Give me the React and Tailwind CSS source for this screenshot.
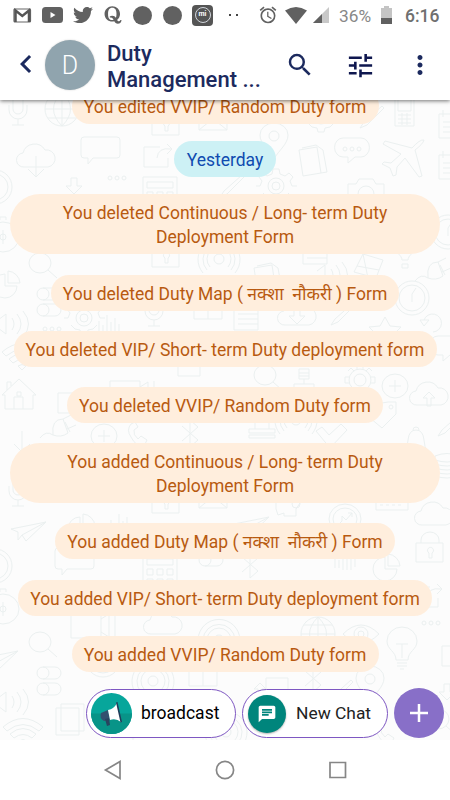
import React from "react";
import { FaTwitter, FaQuora } from "react-icons/fa";
import { MdAlarm, MdChat, MdChevronLeft, MdMoreVert, MdSearch, MdTune } from "react-icons/md";

const messages = [
  { text: "You edited VVIP/ Random Duty form", width: "w-[307px]" },
  { text: "Yesterday", date: true, width: "w-[102px]" },
  { text: "You deleted Continuous / Long- term Duty Deployment Form", width: "w-[430px]", long: true },
  { text: "You deleted Duty Map ( नक्शा  नौकरी ) Form", width: "w-[348px]" },
  { text: "You deleted VIP/ Short- term Duty deployment form", width: "w-[423px]" },
  { text: "You deleted VVIP/ Random Duty form", width: "w-[316px]" },
  { text: "You added Continuous / Long- term Duty Deployment Form", width: "w-[430px]", long: true },
  { text: "You added Duty Map ( नक्शा  नौकरी ) Form", width: "w-[340px]" },
  { text: "You added VIP/ Short- term Duty deployment form", width: "w-[414px]" },
  { text: "You added VVIP/ Random Duty form", width: "w-[307px]" },
];

// line drawings of the wallpaper, each around its own 0,0
const shapes = {
  mic: "M-5 -14v14a5 5 0 0 0 10 0v-14M-9 -4v5a9 9 0 0 0 18 0v-5M0 10v6M-6 16h12",
  globe: "M-17 0a17 17 0 1 0 34 0a17 17 0 1 0 -34 0M-17 0h34M0 -17v34M-14 -9h28M-14 9h28M0 -17q-17 17 0 34M0 -17q17 17 0 34",
  lock: "M-14 -9h27v19h-27zM-9 -9v-3a9 8 0 0 1 18 0v3M-1 6v-5a3 3 0 1 1 3 0v5z",
  mail: "M-14 -10h28v20h-28zM-14 10l11 -9M14 10l-11 -9M-14 -10l14 12l14 -12",
  cloud: "M-12 8a7 7 0 0 1 -1 -14a12 12 0 0 1 22 -3a8 8 0 0 1 3 17z",
  down: "M0 -5v20M-8 8l8 8l8 -8",
  up: "M-2 8v-8h-4l6 -6l6 6h-4v8z",
  arrow: "M-3 -8h6v8h5l-8 8l-8 -8h5z",
  speech: "M-17 -13h33q3 0 3 3v15q0 3 -3 3h-24l-5 6v-6h-4q-3 0 -3 -3v-15q0 -3 3 -3z",
  share: "M2 -9h-16v20h24v-9M-1 2q1 -11 14 -9M9 -12l5 5l-5 5",
  dots: "M-9 0a2 2 0 1 0 4 0a2 2 0 1 0 -4 0M-2 0a2 2 0 1 0 4 0a2 2 0 1 0 -4 0M5 0a2 2 0 1 0 4 0a2 2 0 1 0 -4 0",
  calc: "M-17 -16h34v38h-34zM-13 -11h26v6h-26zM-13 -1h6v6h-6zM-3 -1h6v6h-6zM7 -1h6v6h-6zM-13 9h6v6h-6zM-3 9h6v6h-6zM7 9h6v6h-6z",
  lens: "M-11 0a11 10 0 1 0 22 0a11 10 0 1 0 -22 0M8 7l9 8",
  pie: "M0 -12a12 12 0 1 0 12 12h-12zM3 -15a13 13 0 0 1 12 12h-12z",
  rings: "M-5 0a5 5 0 1 0 10 0a5 5 0 1 0 -10 0M-9 8a12 12 0 1 1 18 0M-12 11a16 16 0 1 1 24 0M-16 14a21 21 0 1 1 32 0",
  toggle: "M-6 -6h12a6 6 0 0 1 0 12h-12a6 6 0 0 1 0 -12zM-6 -6a6 6 0 0 1 0 12",
  pin: "M0 20c-5 -9 -14 -15 -14 -24a14 12 0 0 1 28 0c0 9 -9 15 -14 24zM-5 -3a5 5 0 1 0 10 0a5 5 0 1 0 -10 0",
  docs: "M-14 -12l18 -3l4 26l-18 3zM-11 -14l14 -3l7 5l4 22l-6 1",
  bubble: "M-9 -11h18a8 9 0 0 1 0 19h-6l-7 6v-6h-5a8 9 0 0 1 0 -19z",
  plane: "M20 -19q-4 -1 -12 8l-27 -7l-2 3l18 10l-10 9l-7 -1l-2 2l8 4l3 8l3 -1l1 -8l8 -9l14 19l3 -1l-7 -26q8 -6 9 -10z",
  phone: "M-10 -18h19v32h-19zM-7 -14h13v13h-13zM-7 3h13M-7 7h13M-7 11h13M-3 1v12M2 1v12",
  gear: "M-3 -17h6l1 5l5 2l4 -3l4 4l-3 4l2 5h5M-3 -17l-1 5l-5 2l-4 -3l-4 4l3 4l-2 5h-4M-13 7l4 4l5 1l1 4h6l1 -4l5 -1l4 -4M-8 0a8 8 0 1 0 16 0a8 8 0 1 0 -16 0M-4 0a4 4 0 1 0 8 0a4 4 0 1 0 -8 0",
  cog: "M-11 0a11 11 0 1 0 22 0a11 11 0 1 0 -22 0M-6 0a6 6 0 1 0 12 0a6 6 0 1 0 -12 0M-3 -15h6v4M-3 -15v4M-3 15h6v-4M-3 15v-4M-15 -3v6h4M-15 -3h4M15 -3v6h-4M15 -3h-4M-12 -9l3 -3l3 3M12 -9l-3 -3l-3 3M-12 9l3 3l3 -3M12 9l-3 3l-3 -3",
  camera: "M-18 -9h8l3 -5h14l3 5h8v20h-36zM-8 1a8 8 0 1 0 16 0a8 8 0 1 0 -16 0",
  sheet: "M-12 -10h24v24h-24zM-8 -14v7M-8 -2h20M-8 3h20M-8 8h20",
  clock: "M-17 0a17 17 0 1 0 34 0a17 17 0 1 0 -34 0M-13 0a13 13 0 1 0 26 0a13 13 0 1 0 -26 0M0 4v-8l4 -6",
  gauge: "M-16 0a16 15 0 1 0 32 0a16 15 0 1 0 -32 0M-12 0a12 11 0 1 0 24 0a12 11 0 1 0 -24 0M-7 6l4 -4v-5l4 4l6 -7M3 -6h4v4",
  watch: "M-16 0a16 15 0 1 0 32 0a16 15 0 1 0 -32 0M-3 -17v-3h6v3M0 -7v14M-3 0a3 3 0 1 0 6 0a3 3 0 1 0 -6 0",
  speaker: "M-8 -4l8 -6v20l-8 -6M6 -6q4 6 0 12M11 -10q8 10 0 20M17 -13q11 13 0 26",
  bars: "M-9 -6v12M-5 -2v8M-1 -12v20M3 -5v13M7 -9v17M11 -3v8",
  book: "M0 -9q-7 -4 -14 0v16h28v-16q-7 -4 -14 0v16",
  star: "M0 -9l5 9l11 1l-8 8l3 10M0 -9l-5 9l-11 1l8 8l-3 10",
  undo: "M-10 -3a9 9 0 1 1 9 12M-14 -3h9l-5 6z",
  wifi: "M-20 -5q20 -17 40 0l-4 4q-16 -13 -32 0zM-13 2q13 -11 26 0l-4 4q-9 -7 -18 0zM-4 9q4 -3 8 0l-4 4z",
  house: "M-17 0l17 -16l17 16h-3v14h-28v-14zM-5 14v-12h9v12M-12 -5v-8h4v4M-2 -3h4v4h-4z",
  plug: "M-19 8q6 -8 13 -3q8 3 15 -2l-5 -14q-12 0 -10 16M4 -11l8 -4M8 -1l9 -4M6 -8l5 10",
  plus: "M-13 0a13 12 0 1 0 26 0a13 12 0 1 0 -26 0M-6 0h12M0 -6v12",
  call: "M-7 -10q-5 6 0 13q5 10 13 9l3 -6l-6 -4l-3 3q-5 -4 -4 -9l4 -3l-3 -5z",
  bt: "M-8 -7l16 14l-8 7v-27l8 7l-16 14",
  server: "M-5 -12h10v10h-10zM-5 -8h10M-5 -5h10M0 -2v5M-10 3h20v10h-20z",
  tag: "M-8 -11l12 -2h8v12l-14 14l-12 -10M5 -8a2 2 0 1 0 4 0a2 2 0 1 0 -4 0",
  stamp: "M-7 -12v14M7 -12v14M-13 2h26v4h-26zM-13 8h26v3h-26zM-16 -6h5M11 -6h5",
  check: "M-14 -5l6 -4l7 8l12 -11l6 6l-17 18z",
  bell: "M-12 10q4 -5 4 -12q1 -10 8 -10t8 10q0 7 4 12M-3 -12a3 3 0 1 1 6 0",
  disks: "M-12 -10q12 -5 24 0v4q-12 4 -24 0zM-12 -2q12 4 24 0v4q-12 4 -24 0zM-12 6q12 4 24 0v4q-12 4 -24 0z",
  paper: "M-17 -2l35 -7l-20 19l-4 -6l-4 5v-8zM18 -9l-24 13",
  head: "M-12 8l-2 -6v-8q4 -8 12 -8q12 0 12 10l-4 6v7h-12v-3zM2 -3a4 4 0 1 0 8 0a4 4 0 1 0 -8 0",
  calendar: "M-16 -8h32v16h-32zM-12 3h3M-6 3h3M0 3h3M6 3h3M-16 -2h32",
  cam: "M-24 -12h30v25h-30zM6 -6l8 -5v23l-8 -5M20 -12v24",
  eye: "M-18 0q18 -18 36 0q-18 18 -36 0zM-7 0a7 7 0 1 0 14 0a7 7 0 1 0 -14 0M-3 0a3 3 0 1 0 6 0a3 3 0 1 0 -6 0",
  bulb: "M-6 20c0 -9 -9 -10 -9 -19a15 14 0 0 1 30 0c0 9 -9 10 -9 19zM0 18v-14M-6 4h12M-5 23h10M-5 26h10M-2 29h4",
  squares: "M-14 -10h23v27h-23zM-9 -14h23v27h-23z",
  pen: "M-12 12l4 -6l18 -16l2 2l-17 17z",
  gem: "M-12 8l9 -18l20 6l-7 18zM-3 -10l5 24M-9 2l22 4",
  balloon: "M-3 8c0 -5 -7 -7 -7 -13a10 9 0 0 1 20 0c0 6 -7 8 -7 13zM-3 12h6v4h-6z",
  square: "M-8 -10h22v20h-22z",
};

const wallpaper = [
  ["mic", 18, 109], ["globe", 62, 109], ["lock", 166, 125], ["mail", 213, 120], ["cloud", 36, 159], ["down", 36, 161],
  ["speech", 101, 150], ["share", 158, 156], ["clock", -5, 187], ["arrow", 74, 186], ["dots", 117, 178],
  ["calc", 160, 193], ["watch", 3, 237], ["lens", 40, 263], ["pie", 5, 286], ["lock", 166, 257], ["rings", 219, 259],
  ["toggle", 49, 294], ["toggle", 49, 310], ["pin", 274, 139], ["docs", 313, 162], ["bubble", 352, 149], ["dots", 352, 149],
  ["plane", 404, 159], ["phone", 405, 112], ["sheet", 451, 124], ["sheet", 451, 165], ["gear", 276, 186], ["camera", 366, 193],
  ["gear", 321, 116], ["pen", 372, 116], ["pen", 232, 185], ["clock", 448, 232], ["gem", 366, 264], ["balloon", 405, 252],
  ["plug", 434, 273], ["docs", 268, 280], ["speaker", 325, 275], ["sheet", 315, 250], ["clock", 412, 298],
  ["speaker", 6, 324], ["gear", 84, 318], ["dots", 52, 329], ["bars", 108, 327], ["mic", 154, 310], ["book", 208, 312],
  ["cloud", 297, 317], ["arrow", 297, 316], ["sheet", 246, 316], ["pen", 343, 313], ["star", 385, 326], ["undo", 434, 323],
  ["wifi", 22, 357], ["house", 19, 395], ["square", 66, 403], ["square", 186, 366], ["cam", 134, 393], ["plug", 59, 430],
  ["plus", 104, 436], ["call", 138, 434], ["bt", 190, 433], ["down", 22, 436], ["lens", 265, 375], ["rings", 224, 352],
  ["server", 304, 381], ["cog", 360, 380], ["plus", 395, 386], ["cloud", 429, 397], ["up", 429, 398], ["bubble", 447, 347],
  ["tag", 384, 415], ["stamp", 262, 427], ["check", 330, 436], ["bell", 416, 442], ["pen", 450, 424], ["disks", 447, 466],
  ["rings", 296, 420], ["mic", 18, 490], ["lock", 166, 503], ["mail", 213, 498], ["paper", 28, 531], ["pie", 80, 529],
  ["bars", 120, 526], ["speech", 75, 561], ["clock", -5, 566], ["watch", 3, 609], ["lens", 40, 642], ["calc", 160, 570],
  ["toggle", 211, 560], ["cam", 95, 625], ["cloud", 163, 626], ["rings", 219, 640], ["toggle", 49, 673], ["toggle", 49, 689],
  ["head", 290, 507], ["gauge", 345, 519], ["calendar", 392, 502], ["cloud", 434, 517], ["paper", 251, 526], ["lock", 430, 552],
  ["pie", 385, 569], ["bars", 344, 562], ["bt", 250, 564], ["globe", 318, 634], ["eye", 361, 634], ["bulb", 402, 640],
  ["share", 428, 596], ["dots", 431, 623], ["square", 450, 656], ["paper", 0, 660], ["speaker", 6, 702], ["wifi", 23, 732],
  ["squares", 70, 718], ["rings", 153, 681], ["book", 203, 679], ["clock", 103, 660], ["pin", 370, 682], ["bt", 313, 678],
  ["up", 260, 689], ["pen", 341, 690], ["arrow", 447, 692], ["rings", 226, 732], ["square", 274, 688], ["call", 385, 732],
  ["lens", 438, 719], ["mic", 133, 728],
];

const Wallpaper = () => (
  <svg className="absolute inset-0 w-full h-full" viewBox="0 100 450 640" fill="none" stroke="#ebf0f0" strokeWidth="1">
    {wallpaper.map(([name, x, y], i) => (
      <path key={i} d={shapes[name]} transform={`translate(${x} ${y})`} />
    ))}
  </svg>
);

const StatusBar = () => (
  <div className="h-[30px] flex items-center justify-between pl-[13px] pr-[10px] text-[#616161]">
    <div className="flex items-center">
      <svg width="19" height="15" viewBox="0 0 19 15">
        <rect x="1" y="1" width="16.5" height="13" rx="1" fill="#fff" stroke="#666" strokeWidth="1.2" />
        <path d="M2.5 14V2.5L9.3 8L16 2.5V14" fill="none" stroke="#555" strokeWidth="2.5" />
      </svg>
      <svg className="ml-[10px]" width="21" height="16" viewBox="0 0 21 16">
        <rect width="21" height="16" rx="3.5" fill="#616161" />
        <path d="M8.5 5v6l5-3z" fill="#fff" />
      </svg>
      <FaTwitter size={20} className="ml-[10px]" />
      <FaQuora size={20} className="ml-[10px]" />
      <span className="ml-[10px] w-[19px] h-[19px] rounded-full bg-[#616161]" />
      <span className="ml-[11px] w-[19px] h-[19px] rounded-full bg-[#616161]" />
      <span className="ml-[10px] w-[21px] h-[21px] rounded bg-[#555] flex items-center justify-center">
        <span className="w-[16px] h-[16px] rounded-full border border-gray-300 text-white text-[7px] font-bold leading-[13px] text-center">mi</span>
      </span>
      <span className="ml-[16px] w-[2px] h-[2px] bg-[#444]" />
      <span className="ml-[5px] w-[2px] h-[2px] bg-[#444]" />
    </div>
    <div className="flex items-center">
      <MdAlarm size={20} className="relative left-[2px]" />
      <svg className="ml-[9px]" width="22" height="17" viewBox="0 0 22 17">
        <path d="M0 3.5Q11 -3.5 22 3.5L11 17z" fill="#616161" />
      </svg>
      <svg className="ml-[6px]" width="16" height="16" viewBox="0 0 16 16">
        <path d="M16 0v16H0z" fill="#c8c8c8" />
        <path d="M9 7v9H0z" fill="#616161" />
      </svg>
      <span className="ml-[10px] mt-[2px] w-[33px] text-[17.3px] leading-[20px] whitespace-nowrap text-[#888]">36%</span>
      <svg className="ml-[9px]" width="11" height="18" viewBox="0 0 11 18">
        <path d="M3 0h5v2h3v10H0V2h3z" fill="#c4c4c4" />
        <path d="M0 12h11v6H0z" fill="#606060" />
      </svg>
      <span className="ml-[13px] mt-[2px] w-[35px] text-[17.5px] leading-[20px] font-medium whitespace-nowrap text-[#707070]">6:16</span>
    </div>
  </div>
);

const Header = () => (
  <header className="relative z-10 h-[100px] shrink-0 bg-white shadow-[0_1px_4px_rgba(0,0,0,0.55)]">
    <StatusBar />
    <div className="h-[70px] flex items-center text-[#1c2a5e]">
      <MdChevronLeft size={36} className="ml-[8px] mr-px -mt-[2px] shrink-0" />
      <div className="w-[50px] h-[50px] shrink-0 rounded-full bg-[#90a4ae] text-white text-[25px] font-light flex items-center justify-center pt-px shadow-[0_0_2px_rgba(0,0,0,0.2)]">
        D
      </div>
      <h1 className="ml-[12px] mt-[3px] w-[168px] shrink-0 text-[22px] leading-[26px] font-medium">
        Duty
        <br />
        Management ...
      </h1>
      <MdSearch size={30} className="ml-[10px] -mt-px shrink-0" />
      <MdTune size={31} className="ml-[30px] shrink-0 text-[#0f174f]" />
      <MdMoreVert size={30} className="ml-[29px] shrink-0" />
    </div>
  </header>
);

const Message = ({ text, date, width, long }) => {
  if (date) {
    return (
      <div className={`${width} h-[36px] -my-[3px] pt-[2px] shrink-0 rounded-full bg-[#cdf1f5] text-[#0f4bb0] flex items-center justify-center`}>
        {text}
      </div>
    );
  }
  return (
    <div
      className={`${width} ${long ? "h-[60px] px-[45px]" : "h-[36px] whitespace-pre"} pt-[2px] shrink-0 rounded-[30px] bg-[#ffeedd] text-[#b85a10] flex items-center justify-center text-center`}
    >
      {text}
    </div>
  );
};

const Actions = () => (
  <div className="absolute bottom-[2px] right-[6px] flex items-center text-black">
    <button className="w-[150px] h-[49px] rounded-full border border-[#7e57c2] bg-white flex items-center pl-[4px]">
      <svg width="41" height="41" viewBox="0 0 41 41">
        <circle cx="20.5" cy="20.5" r="20.5" fill="#07a69b" />
        <path d="M0 20.5h41a20.5 20.5 0 0 1-41 0z" fill="#089488" />
        <path d="M10 20l7-3 2 10-6 1q-5-3-3-8z" fill="#33516f" />
        <path d="M14 26l4-1 1 7-3 1z" fill="#29445f" />
        <path d="M17 17q6-1 9-7l4 19q-5-4-11-2z" fill="#fff" />
        <path d="M25 9.5l1.5-.5 4.5 20-1.5.5z" fill="#213b58" />
      </svg>
      <span className="ml-[9px] -mt-px text-[17.5px]">broadcast</span>
    </button>
    <button className="ml-[6px] w-[146px] h-[49px] rounded-full border border-[#7e57c2] bg-white flex items-center pl-[5px]">
      <span className="w-[38px] h-[38px] rounded-full bg-[#00857c] text-white flex items-center justify-center shadow-[0_1px_2px_rgba(0,0,0,0.3)]">
        <MdChat size={20} />
      </span>
      <span className="ml-[10px] -mt-px text-[17.4px] text-[#222]">New Chat</span>
    </button>
    <button className="ml-[6px] -mt-px w-[50px] h-[50px] rounded-full bg-[#886fc8] flex items-center justify-center">
      <svg width="18" height="18" viewBox="0 0 18 18" stroke="#fff" strokeWidth="2.5">
        <path d="M9 0v18M0 9h18" />
      </svg>
    </button>
  </div>
);

const NavBar = () => (
  <nav className="h-[60px] shrink-0 bg-white">
    <svg width="450" height="60" viewBox="0 0 450 60" fill="none" stroke="#868686" strokeWidth="1.7">
      <path d="M120 21.5v17L105.500 30z" />
      <circle cx="225" cy="30" r="8.600" />
      <path d="M330 22.500h15.500v15h-15.500z" />
    </svg>
  </nav>
);

const App = () => {
  return (
    <div className="w-[450px] h-[800px] overflow-hidden bg-white flex flex-col font-['Roboto','Noto_Sans',sans-serif]">
      <Header />
      <main className="relative flex-1 min-h-0 overflow-hidden bg-[#fcfcfc]">
        <Wallpaper />
        <div className="relative h-full -mt-[12px] flex flex-col items-center gap-[20.2px] text-[17.5px] leading-[24px]">
          {messages.map((m, i) => (
            <Message key={i} {...m} />
          ))}
        </div>
        <Actions />
      </main>
      <NavBar />
    </div>
  );
};

export default App;
